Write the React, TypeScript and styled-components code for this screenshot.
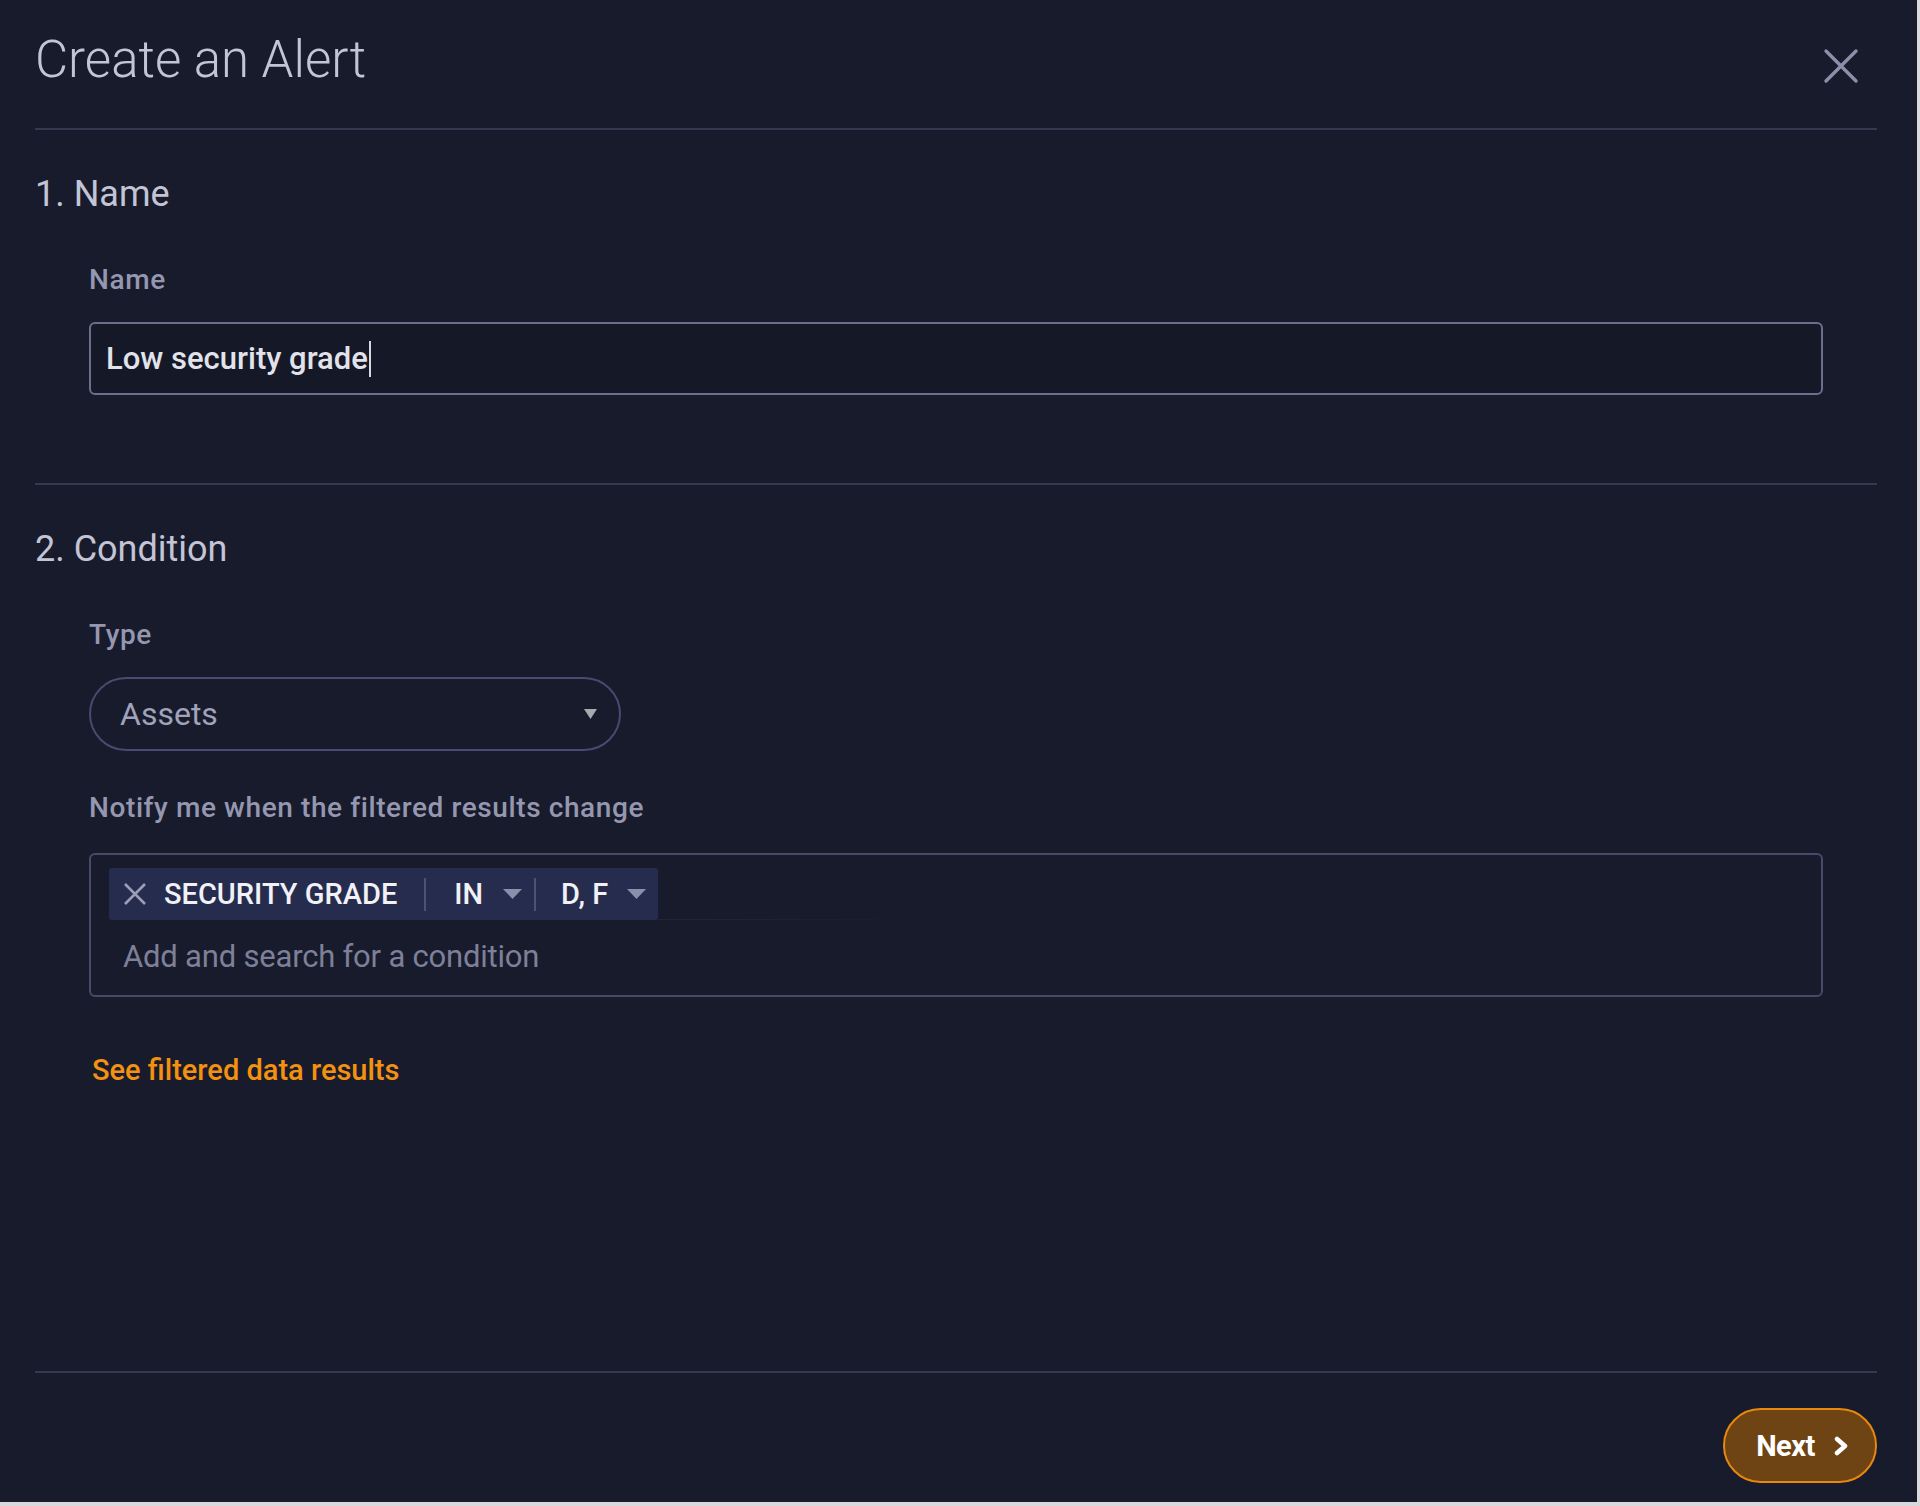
import React from "react";
import styled, { createGlobalStyle } from "styled-components";

const GlobalStyle = createGlobalStyle`
    html, body {
        margin: 0;
        padding: 0;
        background-color: #d9d9dc;
    }
    * {
        box-sizing: border-box;
    }
`;

const theme = {
    bg: "#181b2b",
    divider: "#353950",
    heading: "#c3c5d6",
    label: "#9597b0",
    text: "#e2e3ea",
    muted: "#7e8099",
    orange: "#f39110",
    font: `Roboto, "Noto Sans", "Liberation Sans", sans-serif`,
};

const Panel = styled.div`
    width: 1917px;
    height: 1502px;
    background-color: ${theme.bg};
    font-family: ${theme.font};
    padding: 0 40px 0 35px;
    display: flex;
    flex-direction: column;
`;

const Header = styled.header`
    height: 128px;
    padding-top: 35px;
    display: flex;
    justify-content: space-between;
    align-items: flex-start;
`;

const Title = styled.h1`
    margin: 0;
    font-size: 51px;
    line-height: 50px;
    font-weight: 300;
    color: ${theme.heading};
`;

const CloseButton = styled.button`
    background: none;
    border: none;
    padding: 0;
    margin: 13px 18px 0 0;
    width: 36px;
    height: 36px;
    cursor: pointer;
    display: flex;
`;

const Divider = styled.hr`
    margin: 0;
    border: none;
    height: 2px;
    background-color: ${theme.divider};
    flex-shrink: 0;
`;

const Section = styled.section<{ $bottom: number }>`
    padding-top: 46px;
    padding-bottom: ${props => props.$bottom}px;
`;

const SectionTitle = styled.h2`
    margin: 0;
    font-size: 36px;
    line-height: 36px;
    font-weight: 400;
    color: ${theme.heading};
`;

const Field = styled.div`
    margin: 0 54px;
    display: flex;
    flex-direction: column;
    align-items: flex-start;
`;

const Label = styled.label<{ $top: number }>`
    margin-top: ${props => props.$top}px;
    font-size: 28px;
    line-height: 28px;
    font-weight: 500;
    color: ${theme.label};
    letter-spacing: 0.6px;
`;

const TextField = styled.div`
    margin-top: 28px;
    width: 100%;
    height: 73px;
    border: 2px solid #6c6e8e;
    border-radius: 6px;
    background-color: #151827;
    padding: 0 15px;
    display: flex;
    align-items: center;
    font-size: 31px;
    font-weight: 500;
    color: ${theme.text};
`;

const Caret = styled.span`
    display: inline-block;
    width: 2px;
    height: 36px;
    margin-left: 1px;
    background-color: #d8d8e0;
`;

const Select = styled.div`
    margin-top: 28px;
    width: 532px;
    height: 74px;
    border: 2px solid #454c6f;
    border-radius: 37px;
    padding: 0 22px 0 29px;
    display: flex;
    align-items: center;
    justify-content: space-between;
    font-size: 32px;
    color: #a0a3ba;
`;

const ConditionBox = styled.div`
    margin-top: 31px;
    width: 100%;
    height: 144px;
    border: 2px solid #464b6a;
    border-radius: 6px;
    padding: 13px 18px 0;
    display: flex;
    flex-direction: column;
    align-items: flex-start;
`;

const ChipRow = styled.div`
    display: flex;
    align-items: flex-end;
`;

const Chip = styled.div`
    height: 52px;
    background-color: #262c4e;
    border-radius: 3px;
    padding: 0 12px 0 14px;
    display: flex;
    align-items: center;
    color: #f1f1f6;
    font-size: 29px;
    font-weight: 500;
`;

const ChipTrail = styled.div`
    width: 225px;
    height: 1px;
    background: linear-gradient(90deg, #22263a, #1a1d2e);
`;

const ChipRemove = styled.span`
    display: flex;
    margin-right: 17px;
`;

const ChipSep = styled.span<{ $gapLeft: number; $gapRight: number }>`
    width: 2px;
    height: 33px;
    background-color: #4c5272;
    margin: 0 ${props => props.$gapRight}px 0 ${props => props.$gapLeft}px;
`;

const ChipArrow = styled.span<{ $gap: number }>`
    display: flex;
    margin-left: ${props => props.$gap}px;
`;

const Placeholder = styled.div`
    margin-top: 21px;
    padding-left: 14px;
    font-size: 31px;
    line-height: 31px;
    color: ${theme.muted};
    letter-spacing: -0.2px;
`;

const ResultsLink = styled.a`
    margin: 59px 0 0 3px;
    font-size: 29px;
    line-height: 29px;
    font-weight: 500;
    color: ${theme.orange};
    text-decoration: none;
    cursor: pointer;
`;

const Spacer = styled.div`
    flex: 1;
`;

const Footer = styled.footer`
    padding: 35px 0 19px;
    display: flex;
    justify-content: flex-end;
`;

const NextButton = styled.button`
    width: 154px;
    height: 75px;
    border-radius: 38px;
    border: 2px solid #e8890e;
    background-color: #6e4414;
    color: #ffffff;
    font-family: ${theme.font};
    font-size: 29px;
    font-weight: 700;
    letter-spacing: -0.5px;
    display: flex;
    align-items: center;
    justify-content: center;
    gap: 17px;
    padding: 0 0 0 6px;
    cursor: pointer;
`;

const Triangle = ({ w, h, color }: { w: number; h: number; color: string }) => (
    <svg width={w} height={h} viewBox={`0 0 ${w} ${h}`}>
        <polygon points={`0,0 ${w},0 ${w / 2},${h}`} fill={color} />
    </svg>
);

export default function App() {
    return (
        <>
            <GlobalStyle />
            <Panel>
                <Header>
                    <Title>Create an Alert</Title>
                    <CloseButton aria-label="Close">
                        <svg width="36" height="36" viewBox="0 0 36 36">
                            <path d="M3 3 L33 33 M33 3 L3 33" stroke="#8d8eaa" strokeWidth="3.4" strokeLinecap="round" />
                        </svg>
                    </CloseButton>
                </Header>
                <Divider />

                <Section $bottom={88}>
                    <SectionTitle>1. Name</SectionTitle>
                    <Field>
                        <Label $top={54}>Name</Label>
                        <TextField>
                            Low security grade<Caret />
                        </TextField>
                    </Field>
                </Section>
                <Divider />

                <Section $bottom={0}>
                    <SectionTitle>2. Condition</SectionTitle>
                    <Field>
                        <Label $top={54}>Type</Label>
                        <Select>
                            <span>Assets</span>
                            <Triangle w={13} h={10} color="#a9a9b0" />
                        </Select>

                        <Label $top={43}>Notify me when the filtered results change</Label>
                        <ConditionBox>
                            <ChipRow>
                                <Chip>
                                    <ChipRemove>
                                        <svg width="24" height="22" viewBox="0 0 24 22">
                                            <path d="M2 1 L22 21 M22 1 L2 21" stroke="#9b9eb4" strokeWidth="2.6" />
                                        </svg>
                                    </ChipRemove>
                                    SECURITY GRADE
                                    <ChipSep $gapLeft={27} $gapRight={28} />
                                    IN
                                    <ChipArrow $gap={20}>
                                        <Triangle w={19} h={10} color="#8a8fab" />
                                    </ChipArrow>
                                    <ChipSep $gapLeft={12} $gapRight={25} />
                                    D, F
                                    <ChipArrow $gap={19}>
                                        <Triangle w={19} h={10} color="#8a8fab" />
                                    </ChipArrow>
                                </Chip>
                                <ChipTrail />
                            </ChipRow>
                            <Placeholder>Add and search for a condition</Placeholder>
                        </ConditionBox>

                        <ResultsLink>See filtered data results</ResultsLink>
                    </Field>
                </Section>

                <Spacer />
                <Divider />
                <Footer>
                    <NextButton>
                        Next
                        <svg width="18" height="20" viewBox="0 0 18 20">
                            <path d="M5 3 L13 10 L5 17" fill="none" stroke="#ffffff" strokeWidth="4.5" strokeLinecap="round" strokeLinejoin="round" />
                        </svg>
                    </NextButton>
                </Footer>
            </Panel>
        </>
    );
}
